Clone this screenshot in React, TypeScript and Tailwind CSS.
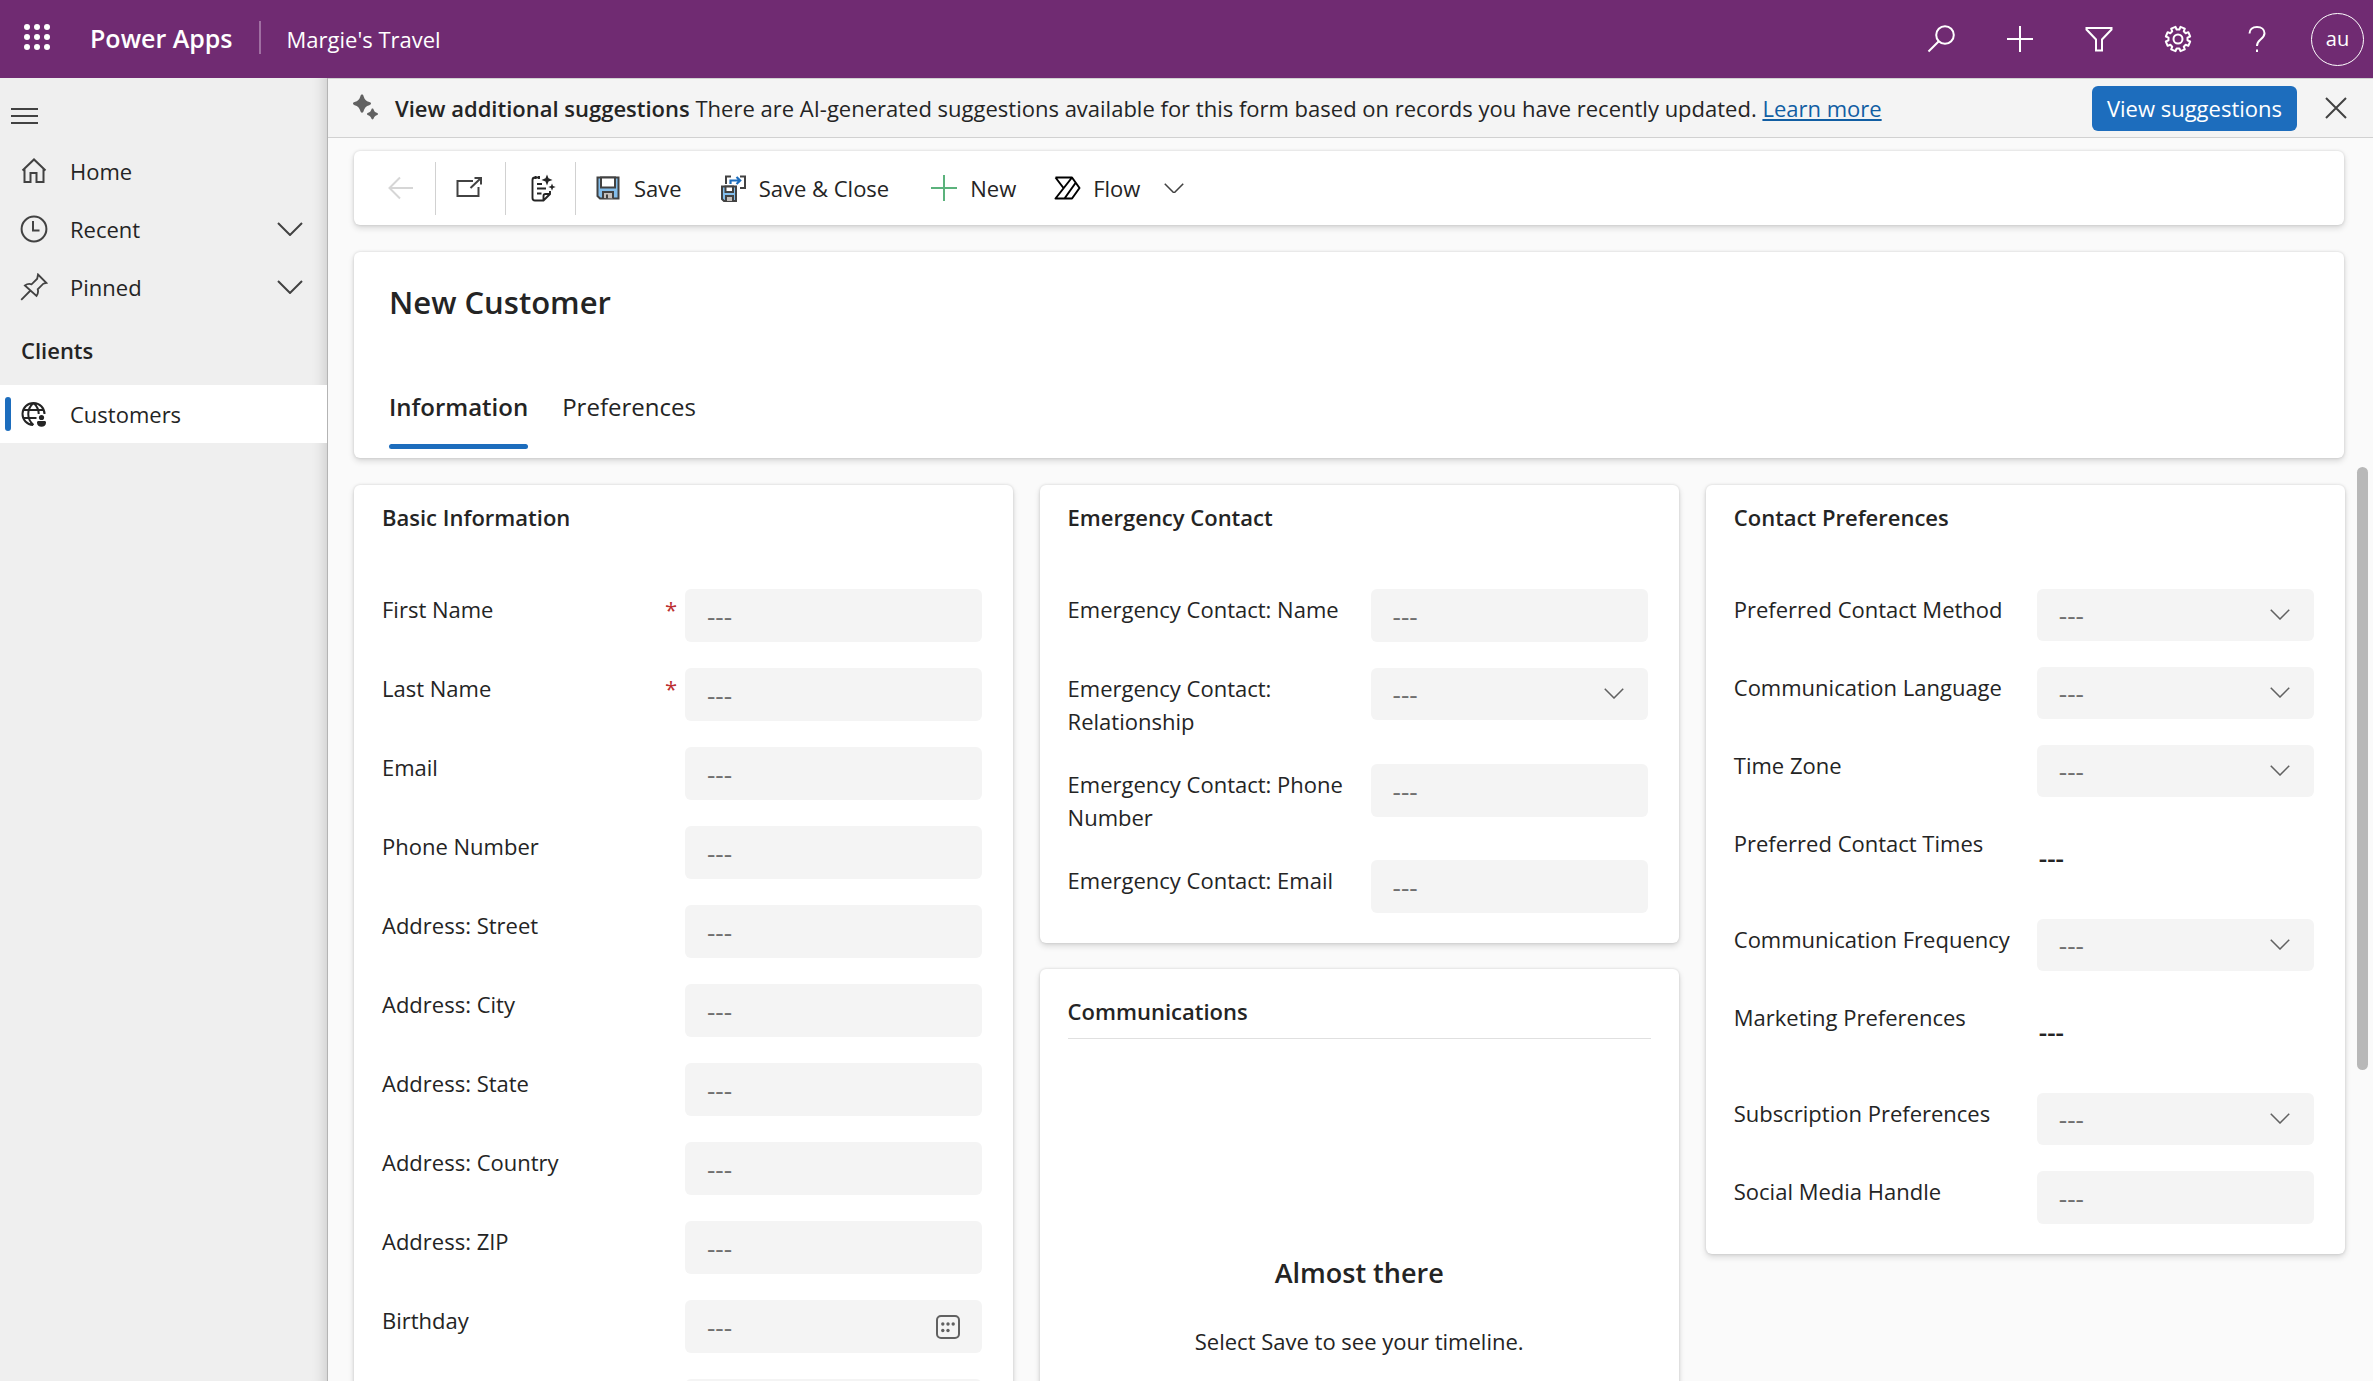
import { useId, useState } from "react";
import type { ReactNode } from "react";

type FieldKind = "text" | "select" | "date" | "multi";

interface Field {
  label: string;
  kind?: FieldKind;
  required?: boolean;
}

const basicFields: Field[] = [
  { label: "First Name", required: true },
  { label: "Last Name", required: true },
  { label: "Email" },
  { label: "Phone Number" },
  { label: "Address: Street" },
  { label: "Address: City" },
  { label: "Address: State" },
  { label: "Address: Country" },
  { label: "Address: ZIP" },
  { label: "Birthday", kind: "date" },
  { label: "" },
];

const emergencyFields: Field[] = [
  { label: "Emergency Contact: Name" },
  { label: "Emergency Contact: Relationship", kind: "select" },
  { label: "Emergency Contact: Phone Number" },
  { label: "Emergency Contact: Email" },
];

const preferenceFields: Field[] = [
  { label: "Preferred Contact Method", kind: "select" },
  { label: "Communication Language", kind: "select" },
  { label: "Time Zone", kind: "select" },
  { label: "Preferred Contact Times", kind: "multi" },
  { label: "Communication Frequency", kind: "select" },
  { label: "Marketing Preferences", kind: "multi" },
  { label: "Subscription Preferences", kind: "select" },
  { label: "Social Media Handle" },
];

interface IconProps {
  size?: number;
  width?: number;
  className?: string;
  children: ReactNode;
}

// every icon is drawn on a 28 unit grid
const Icon = ({ size = 28, width = 2, className = "", children }: IconProps) => (
  <svg
    width={size}
    height={size}
    viewBox="0 0 28 28"
    fill="none"
    stroke="currentColor"
    strokeWidth={width}
    className={`shrink-0 ${className}`}
    aria-hidden="true"
  >
    {children}
  </svg>
);

const Chevron = ({ className = "" }: { className?: string }) => (
  <svg viewBox="0 0 26 14" fill="none" stroke="currentColor" strokeWidth="2" className={`shrink-0 ${className}`} aria-hidden="true">
    <path d="M1 1l12 12L25 1" />
  </svg>
);

const gearPath = () => {
  const points: string[] = [];
  for (let i = 0; i < 8; i++) {
    const mid = (i * Math.PI) / 4 + Math.PI / 8;
    const steps = [
      [-0.25, 9.6],
      [-0.19, 12.4],
      [0.19, 12.4],
      [0.25, 9.6],
    ];
    steps.forEach(([offset, radius]) => {
      const x = 14 + radius * Math.cos(mid + offset);
      const y = 14 + radius * Math.sin(mid + offset);
      points.push(`${x.toFixed(2)} ${y.toFixed(2)}`);
    });
  }
  return `M${points.join("L")}Z`;
};

const Header = () => (
  <header className="flex h-[78px] shrink-0 items-center bg-[#702b72] text-white">
    <button aria-label="App launcher" className="mb-1 ml-[22px]">
      <svg width="30" height="30" viewBox="0 0 30 30" fill="currentColor" aria-hidden="true">
        {[5, 15, 25].map((y) => [5, 15, 25].map((x) => <circle key={`${x}-${y}`} cx={x} cy={y} r="3" />))}
      </svg>
    </button>
    <a href="#" className="ml-[38px] text-[25px] font-semibold">Power Apps</a>
    <span className="mb-1 ml-[26px] h-[33px] w-[2px] bg-[#a06fa2]" />
    <a href="#" className="ml-[26px] text-[22px]">Margie's Travel</a>
    <div className="mr-[9px] ml-auto flex items-center">
      <button aria-label="Search" className="flex w-[79px] justify-center">
        <Icon>
          <circle cx="18" cy="10" r="8.8" />
          <path d="M11.8 16.2L1.5 26.5" />
        </Icon>
      </button>
      <button aria-label="Add" className="flex w-[79px] justify-center">
        <Icon>
          <path d="M14 1v26M1 14h26" />
        </Icon>
      </button>
      <button aria-label="Advanced find" className="flex w-[79px] justify-center">
        <Icon>
          <path d="M1.5 3h25v1.5L17 14.5v11h-6v-11l-9.500-10z" />
        </Icon>
      </button>
      <button aria-label="Settings" className="flex w-[79px] justify-center">
        <Icon>
          <path d={gearPath()} strokeLinejoin="round" />
          <circle cx="14" cy="14" r="4.5" />
        </Icon>
      </button>
      <button aria-label="Help" className="flex w-[79px] justify-center">
        <Icon>
          <path d="M6.5 8.500C6.5 4.500 9.500 2 14 2s7.500 2.500 7.500 6.300c0 3.200-2 4.700-4.200 6.500-2.200 1.800-3.300 3-3.300 6.200" />
          <path d="M14 24.500v2.500" />
        </Icon>
      </button>
      <button className="ml-[15px] flex size-[53px] items-center justify-center rounded-full border border-white text-[20px]">au</button>
    </div>
  </header>
);

const NavItem = ({ label, icon, expandable, active }: { label: string; icon: ReactNode; expandable?: boolean; active?: boolean }) => (
  <a
    href="#"
    aria-current={active ? "page" : undefined}
    className={`flex h-[58px] items-center pr-6 ${active ? "bg-white" : ""}`}
  >
    <span className={`ml-[5px] h-[34px] w-[6px] rounded-sm ${active ? "bg-[#1d6dbd]" : ""}`} />
    <span className="ml-[9px] flex w-7 justify-center">{icon}</span>
    <span className="ml-[22px] text-[22px]">{label}</span>
    {expandable && <Chevron className="ml-auto w-[26px] text-[#424242]" />}
  </a>
);

const Sidebar = () => (
  <nav className="w-[328px] shrink-0 border-r border-[#b4b4b4] bg-[#efefef] shadow-[inset_-16px_0_14px_-14px_rgba(0,0,0,0.16)]">
    <button aria-label="Collapse site map" className="ml-[11px] flex h-16 items-center pt-3">
      <svg width="27" height="18" viewBox="0 0 27 18" stroke="#424242" strokeWidth="2" aria-hidden="true">
        <path d="M0 2h27M0 9h27M0 16h27" />
      </svg>
    </button>
    <NavItem
      label="Home"
      icon={
        <Icon className="text-[#424242]">
          <path d="M2.500 13.500L14 2.500l11.500 11M4.500 11.700V25h6V16h6v9h7V11.700" />
        </Icon>
      }
    />
    <NavItem
      label="Recent"
      expandable
      icon={
        <Icon className="text-[#424242]">
          <circle cx="14" cy="14" r="12.400" />
          <path d="M13 6v9.500h6.500" />
        </Icon>
      }
    />
    <NavItem
      label="Pinned"
      expandable
      icon={
        <Icon width={1.8} className="text-[#424242]">
          <path d="M18 1.500l8.500 8.500-3.200.7-5.600 5.600c.8 2.500.3 4.700-1.200 6.700L4.900 12.500c2-1.500 4.200-2 6.700-1.200l5.600-5.600zM10.500 17.500L1.200 26.800" />
        </Icon>
      }
    />
    <h2 className="flex h-[69px] items-center pl-[21px] text-[22px] font-semibold">Clients</h2>
    <NavItem
      label="Customers"
      active
      icon={
        <Icon>
          <path d="M24.500 14A11 11 0 1 0 13 25M13.500 3c-7 6-7 16 0 22M13.500 3c3.500 3 5.200 7 5.200 11M3.500 10h20.500M3.500 18h13" />
          <circle cx="21.500" cy="17.500" r="2.600" fill="currentColor" stroke="none" />
          <path d="M17 22.500c0-1 .7-1.500 1.500-1.500h6c.8 0 1.500.5 1.500 1.500 0 3-2 4.200-4.500 4.200S17 25.500 17 22.500z" fill="currentColor" stroke="none" />
        </Icon>
      }
    />
  </nav>
);

const SuggestionBar = () => (
  <div className="flex h-[60px] shrink-0 items-center border-y border-[#d1d1d1] bg-[#f4f4f4] pl-6">
    <Icon className="text-[#616161]">
      <g fill="currentColor" stroke="none">
        <path d="M10 .5c1 0 1.300.7 1.600 1.700C12.600 5.500 14 7 17.300 8c1 .3 1.700.7 1.700 1.600s-.7 1.300-1.700 1.600c-3.300 1-4.700 2.500-5.700 5.800-.3 1-.7 1.700-1.600 1.700s-1.300-.7-1.600-1.700c-1-3.300-2.500-4.800-5.800-5.800C1.700 10.900 1 10.500 1 9.600S1.700 8.300 2.600 8C5.900 7 7.400 5.500 8.400 2.200 8.700 1.200 9.100.5 10 .5z" />
        <path d="M20.500 14.500c.7 0 .9.500 1.200 1.200.6 1.700 1.300 2.500 3 3.100.7.200 1.300.5 1.300 1.200s-.6 1-1.300 1.200c-1.700.6-2.400 1.400-3 3.100-.3.700-.5 1.200-1.200 1.200s-1-.5-1.200-1.200c-.6-1.700-1.400-2.500-3.100-3.100-.7-.2-1.200-.5-1.200-1.200s.5-1 1.200-1.200c1.700-.6 2.500-1.400 3.100-3.100.2-.7.500-1.200 1.200-1.200z" />
      </g>
    </Icon>
    <p className="ml-[15px] text-[22px]">
      <strong className="font-semibold">View additional suggestions</strong> There are AI-generated suggestions available for this form based on records you have recently updated.{" "}
      <a href="#" className="text-[#115ea3] underline">Learn more</a>
    </p>
    <button className="ml-auto h-[45px] rounded-md bg-[#1d6dbd] px-[15px] text-[22px] text-white">View suggestions</button>
    <button aria-label="Dismiss" className="mr-[23px] ml-[25px]">
      <Icon className="text-[#424242]">
        <path d="M4 4l20 20M24 4L4 24" />
      </Icon>
    </button>
  </div>
);

const Divider = () => <span className="h-[53px] w-px bg-[#d1d1d1]" />;

const CommandBar = () => (
  <div className="flex h-[74px] shrink-0 items-center rounded-md bg-white text-[22px] shadow-[0_3px_6px_rgba(0,0,0,0.14),0_0_3px_rgba(0,0,0,0.14)]">
    <button aria-label="Go back" disabled className="flex w-[81px] justify-end pr-[21px] text-[#d6d6d6]">
      <Icon>
        <path d="M27 14H4M14 3.500L3.500 14 14 24.500" />
      </Icon>
    </button>
    <Divider />
    <button aria-label="Open in new window" className="flex w-[69px] justify-center pr-1 text-[#424242]">
      <Icon>
        <path d="M18 7H2.500v15h21V13" />
        <path d="M15.500 14L26 4M19.500 4H26v6.500" />
      </Icon>
    </button>
    <Divider />
    <button aria-label="Form fill assistance" className="flex w-[69px] justify-center pl-1">
      <Icon width={1.9}>
        <path d="M11 3.500H6A2.500 2.500 0 0 0 3.500 6v18A2.500 2.500 0 0 0 6 26.500h8.500L21 20v-3M14.500 26.500V22a2 2 0 0 1 2-2H21M6.500 2v3M10 2v3M8 10h5M8 14.500h9M8 19.500h4.500" />
        <path d="M18 .5l1.500 3.800L23.500 6l-4 1.500L18 11.500l-1.500-4-4-1.500 4-1.700zM23 9.500l1 2.600 2.700 1-2.700 1-1 2.700-1-2.700-2.700-1 2.700-1z" fill="currentColor" stroke="none" />
      </Icon>
    </button>
    <Divider />
    <button className="ml-[18px] flex items-center gap-3">
      <Icon className="text-[#424242]">
        <path d="M3.500 3.500h21v21H6l-2.500-2.500z" fill="#83beec" />
        <path d="M7 3.500h14v10H7z" fill="#fff" />
        <path d="M9 24v-6h10v6.500" fill="#c4c0bd" />
        <path d="M13 20.500v4" />
      </Icon>
      Save
    </button>
    <button className="ml-[37px] flex items-center gap-3">
      <Icon className="text-[#424242]">
        <path d="M3 12.500h14V27H5l-2-2z" fill="#83beec" />
        <path d="M6.500 12.500h7.500v5.500H6.500z" fill="#fff" />
        <path d="M7 27v-5h7v5" fill="#c4c0bd" />
        <path d="M7 10V2.500h5M21 2.500h5V14h-5" />
        <path d="M11.500 10V6.500H21M17.500 3l3.700 3.500-3.700 3.500" stroke="#1d6dbd" strokeWidth="2.200" />
      </Icon>
      Save & Close
    </button>
    <button className="ml-[41px] flex items-center gap-3">
      <Icon className="text-[#5bb27c]">
        <path d="M14 1v26M1 14h26" />
      </Icon>
      New
    </button>
    <button className="ml-[37px] flex items-center gap-3">
      <Icon width={2} className="text-black">
        <path d="M2.500 3.500h16.500l7.500 10.500-7.500 10.500H2.500L19 3.500M2.500 3.500L10.500 14M11.500 24.500L22.500 9" strokeLinejoin="round" />
      </Icon>
      Flow
      <Chevron className="ml-3 w-5 text-[#424242]" />
    </button>
  </div>
);

const TitleCard = () => {
  const [tab, setTab] = useState("Information");
  return (
    <div className="mt-[27px] flex flex-col rounded-md bg-white px-[35px] pt-7 pb-[9px] shadow-[0_3px_6px_rgba(0,0,0,0.14),0_0_3px_rgba(0,0,0,0.14)]">
      <h1 className="text-[31px] leading-[44px] font-semibold">New Customer</h1>
      <div role="tablist" className="mt-[65px] flex gap-[34px] text-[24px] leading-9">
        {["Information", "Preferences"].map((name) => (
          <button
            key={name}
            role="tab"
            aria-selected={tab === name}
            onClick={() => setTab(name)}
            className={tab === name ? "font-semibold" : ""}
          >
            {name}
            <span className={`mt-[19px] block h-[5px] rounded-full ${tab === name ? "bg-[#1d6dbd]" : ""}`} />
          </button>
        ))}
      </div>
    </div>
  );
};

const FieldRow = ({ label, kind = "text", required }: Field) => {
  const id = useId();
  const box = "w-full appearance-none rounded-md bg-[#f4f4f4] px-[22px] text-[26px] text-[#707070] placeholder:text-[#707070] outline-none";
  return (
    <div className="flex items-start">
      <label htmlFor={id} className="flex w-[303px] shrink-0 justify-between pt-1 pr-2 text-[22px] leading-[33px]">
        <span>{label}</span>
        {required && <span className="text-[#bc2f32]">*</span>}
      </label>
      {kind === "multi" && (
        <button id={id} className="h-[70px] flex-1 pl-[2px] text-left text-[26px] font-semibold">---</button>
      )}
      {kind === "select" && (
        <div className="relative flex-1">
          <select id={id} className={`${box} block h-[52px]`}>
            <option>---</option>
          </select>
          <Chevron className="pointer-events-none absolute top-5 right-6 w-5 text-[#616161]" />
        </div>
      )}
      {(kind === "text" || kind === "date") && (
        <div className="relative flex-1">
          <input id={id} type="text" placeholder="---" className={`${box} block h-[53px]`} />
          {kind === "date" && (
            <Icon className="pointer-events-none absolute top-[13px] right-5 text-[#616161]">
              <rect x="3" y="3" width="22" height="22" rx="4" />
              <g fill="currentColor" stroke="none">
                <circle cx="8.800" cy="11" r="1.700" />
                <circle cx="14" cy="11" r="1.700" />
                <circle cx="19.200" cy="11" r="1.700" />
                <circle cx="8.800" cy="17.500" r="1.700" />
                <circle cx="14" cy="17.500" r="1.700" />
              </g>
            </Icon>
          )}
        </div>
      )}
    </div>
  );
};

const Section = ({ title, fields }: { title: string; fields: Field[] }) => (
  <section className="rounded-md bg-white pt-4 pr-[31px] pb-[30px] pl-7 shadow-[0_3px_6px_rgba(0,0,0,0.14),0_0_3px_rgba(0,0,0,0.14)]">
    <h2 className="mb-[55px] text-[22px] leading-[33px] font-semibold">{title}</h2>
    <div className="flex flex-col gap-[26px]">
      {fields.map((field) => (
        <FieldRow key={field.label} {...field} />
      ))}
    </div>
  </section>
);

const Timeline = () => (
  <section className="rounded-md bg-white px-7 pt-[26px] pb-16 shadow-[0_3px_6px_rgba(0,0,0,0.14),0_0_3px_rgba(0,0,0,0.14)]">
    <h2 className="border-b border-[#e0e0e0] pb-[10px] text-[22px] leading-[33px] font-semibold">Communications</h2>
    <div className="mt-[212px] text-center">
      <h3 className="text-[27px] leading-[44px] font-semibold">Almost there</h3>
      <p className="mt-[30px] text-[22px] leading-[33px]">Select Save to see your timeline.</p>
    </div>
  </section>
);

const App = () => (
  <div className="flex h-screen flex-col overflow-hidden font-['Open_Sans','Noto_Sans',sans-serif] text-[#242424]">
    <Header />
    <div className="flex min-h-0 flex-1">
      <Sidebar />
      <main className="flex min-w-0 flex-1 flex-col bg-[#fafafa]">
        <SuggestionBar />
        <div className="mt-[13px] mr-[29px] ml-[26px] flex shrink-0 flex-col">
          <CommandBar />
          <TitleCard />
        </div>
        <div className="flex min-h-0 flex-1 overflow-hidden pr-[5px] pl-[26px]">
          <div className="grid flex-1 grid-cols-[34fr_33fr_33fr] items-start gap-[27px] pt-[27px]">
            <Section title="Basic Information" fields={basicFields} />
            <div className="flex flex-col gap-[26px]">
              <Section title="Emergency Contact" fields={emergencyFields} />
              <Timeline />
            </div>
            <Section title="Contact Preferences" fields={preferenceFields} />
          </div>
          <div className="mt-[9px] ml-3 h-[603px] w-[11px] shrink-0 rounded-full bg-[#b8b8b8]" />
        </div>
      </main>
    </div>
  </div>
);

export default App;
